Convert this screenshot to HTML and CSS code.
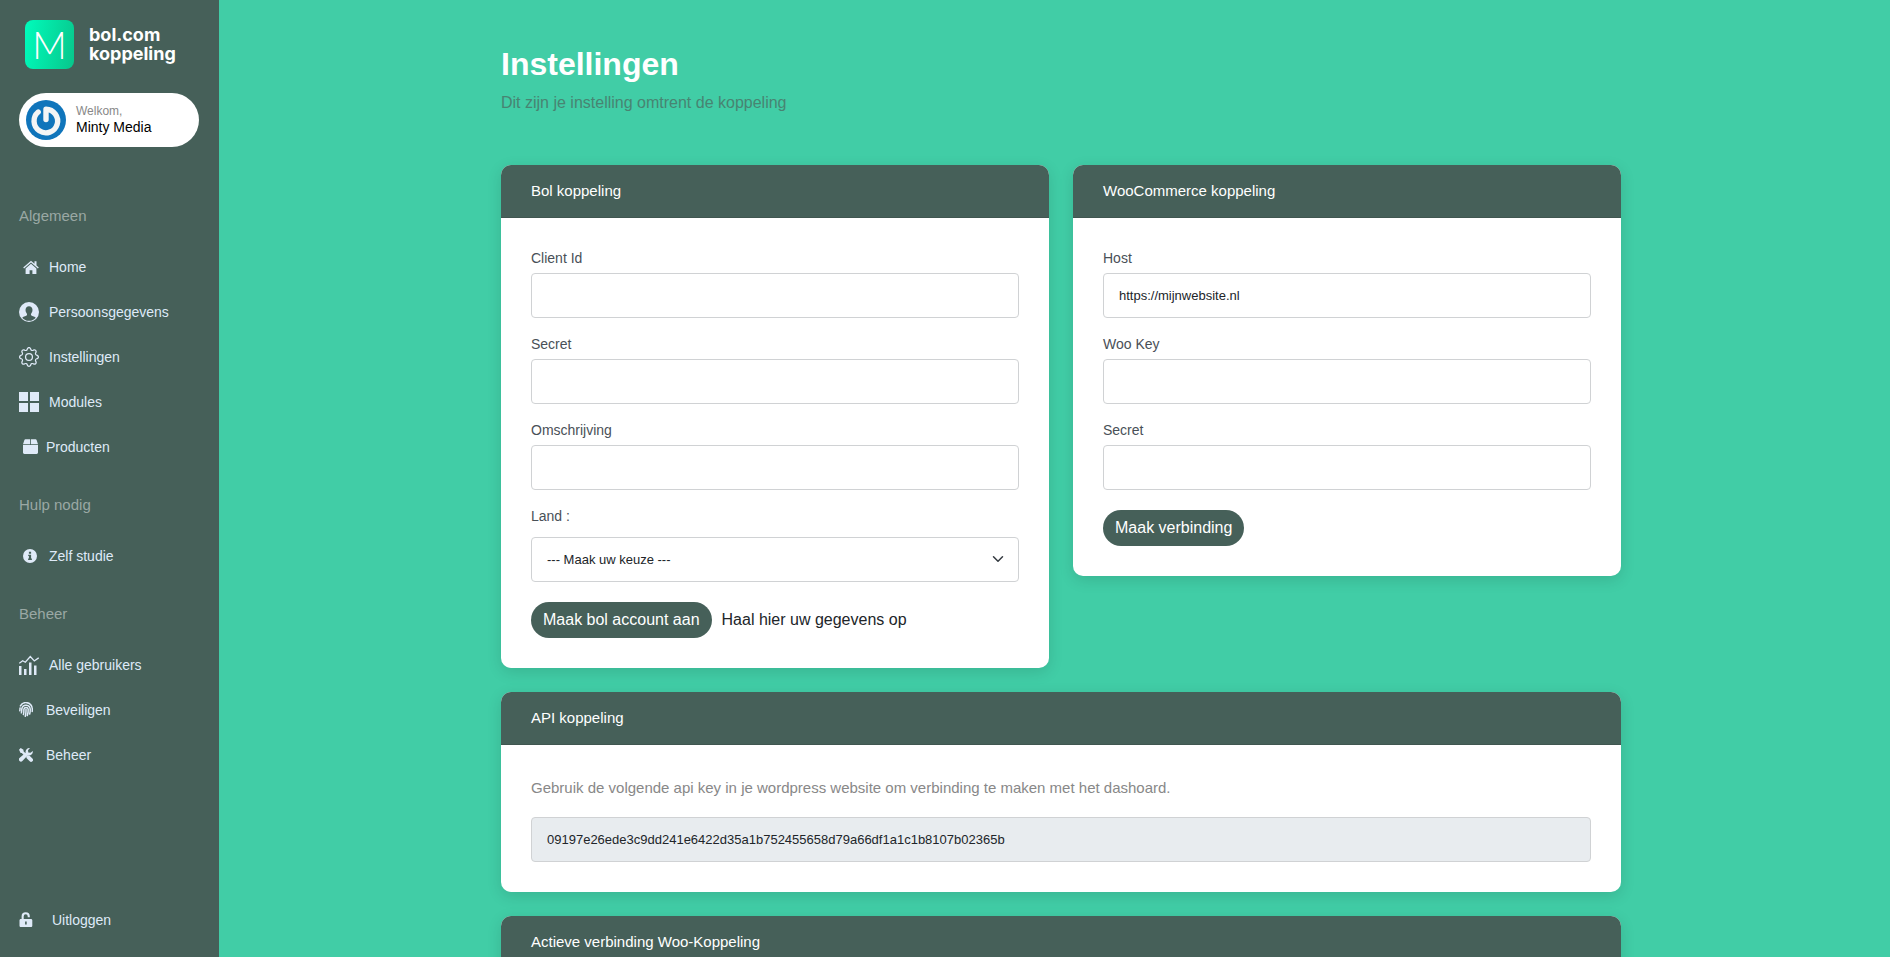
FILE: index.html
```html
<!DOCTYPE html>
<html lang="nl">
<head>
  <meta charset="utf-8">
  <meta name="viewport" content="width=device-width, initial-scale=1">
  <title>Instellingen - bol.com koppeling</title>
  <link rel="stylesheet" href="styles.css">
</head>
<body>
  <div class="app">
    <aside class="sidebar">
      <a class="brand" href="#">
        <span class="brand-mark">M</span>
        <span class="brand-name">bol.com<br>koppeling</span>
      </a>

      <div class="profile">
        <svg class="avatar" viewBox="0 0 40 40" aria-hidden="true">
          <circle cx="20" cy="20" r="20" fill="#1075bb"/>
          <path d="M12.200 12A11.800 11.800 0 1 0 20 9.200V19.500" fill="none" stroke="#f4f5f5" stroke-width="5.400" stroke-linecap="round" stroke-linejoin="round"/>
        </svg>
        <div class="profile-text">
          <span class="profile-hello">Welkom,</span>
          <span class="profile-name">Minty Media</span>
        </div>
      </div>

      <nav class="menu">
        <h2 class="menu-title">Algemeen</h2>
        <ul class="menu-list">
          <li><a class="menu-link" href="#">
            <span class="slot inset"><svg width="16" height="14" viewBox="0 0 16 14"><path d="M8 .8L.2 7.4l.9 1L8 2.6l6.9 5.8.9-1-2.3-2V1.2h-2v2.5z"/><path d="M8 3.8L2.6 8.4V14h4v-3.8h2.8V14h4V8.4z"/></svg></span>
            Home</a></li>
          <li><a class="menu-link" href="#">
            <span class="slot"><svg width="20" height="20" viewBox="0 0 20 20"><path fill-rule="evenodd" d="M10 0a10 10 0 1 0 0 20 10 10 0 0 0 0-20zM3.2 15.7C4.700 14.300 7.600 14 8 13c.2-.6 0-1.200-.4-1.700C6.900 10.400 6.500 9.200 6.500 8c0-2.200 1.500-3.700 3.500-3.700S13.500 5.800 13.500 8c0 1.200-.4 2.400-1.100 3.300-.4.5-.6 1.100-.4 1.700.4 1 3.300 1.300 4.800 2.700A8.800 8.800 0 0 1 10 18.800a8.800 8.800 0 0 1-6.800-3.100z"/></svg></span>
            Persoonsgegevens</a></li>
          <li><a class="menu-link" href="#">
            <span class="slot"><svg width="20" height="20" viewBox="0 0 16 16"><path d="M8 4.754a3.246 3.246 0 1 0 0 6.492 3.246 3.246 0 0 0 0-6.492zM5.754 8a2.246 2.246 0 1 1 4.492 0 2.246 2.246 0 0 1-4.492 0z"/><path d="M9.796 1.343c-.527-1.790-3.065-1.790-3.592 0l-.094.319a.873.873 0 0 1-1.255.52l-.292-.16c-1.640-.892-3.433.902-2.540 2.541l.159.292a.873.873 0 0 1-.52 1.255l-.319.094c-1.790.527-1.790 3.065 0 3.592l.319.094a.873.873 0 0 1 .52 1.255l-.16.292c-.892 1.640.901 3.434 2.541 2.540l.292-.159a.873.873 0 0 1 1.255.52l.094.319c.527 1.790 3.065 1.790 3.592 0l.094-.319a.873.873 0 0 1 1.255-.52l.292.16c1.640.893 3.434-.902 2.540-2.541l-.159-.292a.873.873 0 0 1 .52-1.255l.319-.094c1.790-.527 1.790-3.065 0-3.592l-.319-.094a.873.873 0 0 1-.52-1.255l.16-.292c.893-1.640-.902-3.433-2.541-2.540l-.292.159a.873.873 0 0 1-1.255-.52l-.094-.319zm-2.633.283c.246-.835 1.428-.835 1.674 0l.094.319a1.873 1.873 0 0 0 2.693 1.115l.291-.16c.764-.415 1.600.42 1.184 1.185l-.159.292a1.873 1.873 0 0 0 1.116 2.692l.318.094c.835.246.835 1.428 0 1.674l-.319.094a1.873 1.873 0 0 0-1.115 2.693l.16.291c.415.764-.42 1.600-1.185 1.184l-.291-.159a1.873 1.873 0 0 0-2.693 1.116l-.094.318c-.246.835-1.428.835-1.674 0l-.094-.319a1.873 1.873 0 0 0-2.692-1.115l-.292.16c-.764.415-1.600-.42-1.184-1.185l.159-.291A1.873 1.873 0 0 0 1.945 8.930l-.319-.094c-.835-.246-.835-1.428 0-1.674l.319-.094A1.873 1.873 0 0 0 3.060 4.377l-.16-.292c-.415-.764.42-1.600 1.185-1.184l.292.159a1.873 1.873 0 0 0 2.692-1.115l.094-.319z"/></svg></span>
            Instellingen</a></li>
          <li><a class="menu-link" href="#">
            <span class="slot"><svg width="20" height="20" viewBox="0 0 20 20"><path d="M0 0h9v9H0zM11 0h9v9h-9zM0 11h9v9H0zM11 11h9v9h-9z"/></svg></span>
            Modules</a></li>
          <li><a class="menu-link" href="#">
            <span class="slot slot-narrow inset"><svg width="15" height="15" viewBox="0 0 15 15"><path d="M2.400.3h4.700v5H0L1.400 1.100C1.600.6 1.900.3 2.400.3zM7.900.3h4.700c.5 0 .8.3 1 .8L15 5.300H7.900zM0 6.100h15v7.500c0 .8-.6 1.400-1.400 1.400H1.400C.6 15 0 14.400 0 13.600z"/></svg></span>
            Producten</a></li>
        </ul>

        <h2 class="menu-title">Hulp nodig</h2>
        <ul class="menu-list">
          <li><a class="menu-link" href="#">
            <span class="slot inset"><svg width="14" height="14" viewBox="0 0 14 14"><path fill-rule="evenodd" d="M7 0a7 7 0 1 0 0 14A7 7 0 0 0 7 0zM5.900 2.800h2.200v2H5.900zM5.200 5.700h2.900v3.900h.8V11H5.100V9.600h.8V7.100h-.7z"/></svg></span>
            Zelf studie</a></li>
        </ul>

        <h2 class="menu-title">Beheer</h2>
        <ul class="menu-list">
          <li><a class="menu-link" href="#">
            <span class="slot"><svg width="20" height="20" viewBox="0 0 20 20"><path d="M0 11h2.500v9H0zM5 14h2.500v6H5zM10 7.500h2.500V20H10zM15 10.500h2.500V20H15z"/><path d="M.3 8.300L3.700 5.700l2.600 1.500 5-5.700 4 4.500 4.400-3.200" fill="none" stroke="currentColor" stroke-width="1.300"/></svg></span>
            Alle gebruikers</a></li>
          <li><a class="menu-link" href="#">
            <span class="slot slot-narrow"><svg width="14" height="15" viewBox="0 0 14 15"><g fill="none" stroke="currentColor" stroke-width="1.500" stroke-linecap="round"><path d="M1.400 3.900A6.300 6.300 0 0 1 13 5.200c.4 1.300.4 2.700.2 4.300"/><path d="M.8 8.700c.3-1 .1-1.700.3-2.700M2.400 10.800c.5-1.500.2-2.900.5-4.300A4.200 4.200 0 0 1 11.200 7c.1 1.700 0 3.300-.5 5"/><path d="M4.400 12.600c.7-1.900.4-3.900.5-5.400a2.200 2.200 0 0 1 4.300 0c.1 2.200-.2 4.300-.9 6.300"/><path d="M7 7.200c.1 2.600-.1 4.900-.7 7"/></g></svg></span>
            Beveiligen</a></li>
          <li><a class="menu-link" href="#">
            <span class="slot slot-narrow"><svg width="14" height="14" viewBox="0 0 14 14"><path d="M0 1.700L1.700 0l2.800 1.800v1.500l2.900 2.900-1.700 1.700-2.900-2.900H1.600z"/><path d="M8.400 7.300c.8-.3 1.600-.1 2.200.5l2.800 2.800a1.900 1.900 0 0 1-2.700 2.700L7.900 10.500c-.6-.6-.8-1.400-.5-2.200z"/><path d="M13.800 3a3.800 3.800 0 0 1-5 4.300L3.400 13A2 2 0 0 1 .5 10.100L6.600 4.700A3.900 3.900 0 0 1 11 .1L9 2.300l.3 2.200 2.200.3z"/></svg></span>
            Beheer</a></li>
        </ul>
      </nav>

      <a class="menu-link logout" href="#">
        <svg width="14" height="15" viewBox="0 0 14 15"><path fill-rule="evenodd" d="M2.600 7V4.300a4.100 4.100 0 0 1 8.200 0v1H8.700v-1a2 2 0 0 0-4 0V7H12c.7 0 1.300.6 1.300 1.300v5.400c0 .7-.6 1.300-1.300 1.300H1.800C1.100 15 .5 14.400.5 13.700V8.300C.5 7.600 1.100 7 1.800 7zM6.100 9.400v3.100h1.600V9.400z"/></svg>
        Uitloggen</a>
    </aside>

    <main class="main">
      <div class="container">
        <header class="page-head">
          <h1 class="page-title">Instellingen</h1>
          <p class="page-intro">Dit zijn je instelling omtrent de koppeling</p>
        </header>

        <div class="cards">
          <section class="card">
            <h2 class="card-head">Bol koppeling</h2>
            <form class="card-body">
              <div class="field">
                <label for="client-id">Client Id</label>
                <input class="control" id="client-id" type="text">
              </div>
              <div class="field">
                <label for="bol-secret">Secret</label>
                <input class="control" id="bol-secret" type="text">
              </div>
              <div class="field">
                <label for="description">Omschrijving</label>
                <input class="control" id="description" type="text">
              </div>
              <div class="field field-select">
                <label for="country">Land :</label>
                <div class="select">
                  <select class="control" id="country">
                    <option>--- Maak uw keuze ---</option>
                  </select>
                  <svg class="chevron" width="12" height="12" viewBox="0 0 16 16" aria-hidden="true"><path d="M2 5l6 6 6-6"/></svg>
                </div>
              </div>
              <div class="actions">
                <button class="button" type="button">Maak bol account aan</button>
                <a class="text-link" href="#">Haal hier uw gegevens op</a>
              </div>
            </form>
          </section>

          <section class="card">
            <h2 class="card-head">WooCommerce koppeling</h2>
            <form class="card-body">
              <div class="field">
                <label for="host">Host</label>
                <input class="control" id="host" type="text" value="https://mijnwebsite.nl">
              </div>
              <div class="field">
                <label for="woo-key">Woo Key</label>
                <input class="control" id="woo-key" type="text">
              </div>
              <div class="field">
                <label for="woo-secret">Secret</label>
                <input class="control" id="woo-secret" type="text">
              </div>
              <div class="actions">
                <button class="button" type="button">Maak verbinding</button>
              </div>
            </form>
          </section>

          <section class="card card-wide">
            <h2 class="card-head">API koppeling</h2>
            <div class="card-body">
              <label class="card-note" for="api-key">Gebruik de volgende api key in je wordpress website om verbinding te maken met het dashoard.</label>
              <input class="control control-locked" id="api-key" type="text" readonly value="09197e26ede3c9dd241e6422d35a1b752455658d79a66df1a1c1b8107b02365b">
            </div>
          </section>

          <section class="card card-wide">
            <h2 class="card-head">Actieve verbinding Woo-Koppeling</h2>
            <div class="card-body"></div>
          </section>
        </div>
      </div>
    </main>
  </div>
</body>
</html>
```

FILE: styles.css
```css
* {
  box-sizing: border-box;
}

body {
  margin: 0;
  background: #41cda6;
  color: #212529;
  font: 16px/24px "Liberation Sans", Arial, sans-serif;
}

h1, h2, p, ul {
  margin: 0;
  padding: 0;
  font-weight: 400;
}

a {
  color: inherit;
  text-decoration: none;
}

.app {
  display: flex;
  height: 100vh;
}

/* Sidebar */
.sidebar {
  display: flex;
  flex: none;
  flex-direction: column;
  width: 219px;
  padding: 20px 20px 15px 19px;
  background: #466059;
}

.brand {
  display: flex;
  align-items: center;
  gap: 15px;
  margin-left: 6px;
}

.brand-mark {
  display: flex;
  align-items: center;
  justify-content: center;
  width: 49px;
  height: 49px;
  border-radius: 8px;
  background: linear-gradient(100deg, #00fcbc, #08c68b);
  color: #fff;
  font: 300 38px/49px Lato, sans-serif;
}

.brand-name {
  padding-bottom: 2px;
  color: #fff;
  font: 700 18px/19px Inter, sans-serif;
}

.profile {
  display: flex;
  align-items: center;
  gap: 10px;
  margin-top: 24px;
  padding: 7px;
  border-radius: 27px;
  background: #fff;
}

.avatar {
  width: 40px;
  height: 40px;
}

.profile-text {
  display: flex;
  flex-direction: column;
  padding-bottom: 2px;
  line-height: 16px;
}

.profile-hello {
  color: #888;
  font-size: 12px;
}

.profile-name {
  color: #000;
  font-size: 14px;
}

.menu {
  margin-top: 33px;
}

.menu-title {
  padding: 25px 0 17px;
  color: #9aa8a4;
  font-size: 15px;
  line-height: 22px;
}

.menu-list {
  list-style: none;
}

.menu-link {
  display: flex;
  align-items: center;
  gap: 10px;
  height: 45px;
  color: #dfeaf8;
  font-size: 14px;
}

.menu-link svg {
  flex: none;
  fill: currentColor;
}

.slot {
  display: flex;
  width: 20px;
}

.slot-narrow {
  width: 17px;
}

.inset {
  padding-left: 4px;
}

.logout {
  gap: 19px;
  margin-top: auto;
}

/* Content */
.main {
  flex: 1;
  min-width: 0;
  padding: 0 12px 24px 25px;
  overflow-y: auto;
  scrollbar-width: none;
}

.container {
  max-width: 1120px;
  margin: 0 auto;
}

.page-head {
  padding: 44px 0 50px;
}

.page-title {
  color: #fff;
  font-size: 32px;
  font-weight: 700;
  line-height: 40px;
}

.page-intro {
  padding-top: 7px;
  color: #488472;
}

.cards {
  display: grid;
  grid-template-columns: repeat(2, minmax(0, 1fr));
  align-items: start;
  gap: 24px;
}

.card {
  border-radius: 10px;
  background: #fff;
  box-shadow: 0 4px 15px rgba(0, 0, 0, 0.12);
}

.card-wide {
  grid-column: 1 / -1;
}

.card-head {
  padding: 15px 30px;
  border-bottom: 1px solid #405650;
  border-radius: 10px 10px 0 0;
  background: #466059;
  color: #fff;
  font-size: 15px;
  line-height: 22px;
}

.card-body {
  padding: 30px;
}

.field {
  display: grid;
  gap: 4px;
  margin-bottom: 16px;
  color: #495057;
  font-size: 14px;
  line-height: 21px;
}

.field-select {
  gap: 10px;
}

.control {
  width: 100%;
  height: 45px;
  padding: 0 15px;
  border: 1px solid #d0d2d4;
  border-radius: 4px;
  background: #fff;
  color: #212529;
  font: 13px/20px "Liberation Sans", Arial, sans-serif;
  appearance: none;
}

.control-locked {
  display: block;
  background: #e8ecef;
}

.select {
  position: relative;
}

.chevron {
  position: absolute;
  top: 16px;
  right: 15px;
  fill: none;
  stroke: #343a40;
  stroke-width: 2;
  stroke-linecap: round;
  stroke-linejoin: round;
  pointer-events: none;
}

.actions {
  display: flex;
  align-items: center;
  gap: 10px;
  padding-top: 4px;
}

.button {
  height: 36px;
  padding: 0 12px;
  border: 0;
  border-radius: 18px;
  background: #466059;
  color: #fff;
  font: 16px/24px "Liberation Sans", Arial, sans-serif;
}

.card-note {
  display: block;
  margin-bottom: 16px;
  color: #888;
  font-size: 15px;
  line-height: 26px;
}
```
